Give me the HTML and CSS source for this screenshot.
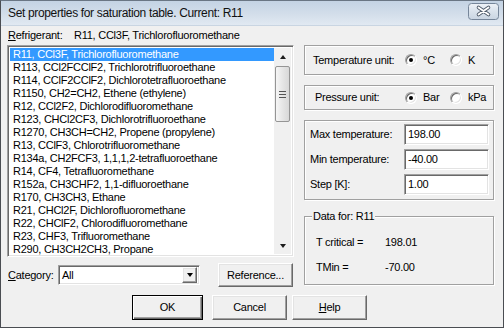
FILE: index.html
```html
<!DOCTYPE html>
<html lang="en">
  <head>
    <meta charset="UTF-8" />
    <title>Set properties for saturation table</title>
    <link rel="stylesheet" href="styles.css">
  </head>
  <body>
    <div class="window">
      <div class="titlebar">
        <span class="title">Set properties for saturation table. Current: R11</span>
        <div class="close-btn">
          <svg width="31" height="17" viewBox="0 0 31 17">
            <defs>
              <linearGradient id="closeGrad" x1="0" y1="0" x2="0" y2="1">
                <stop offset="0" stop-color="#eef2f7" />
                <stop offset="0.5" stop-color="#d9e2ec" />
                <stop offset="1" stop-color="#c9d5e2" />
              </linearGradient>
            </defs>
            <rect x="0.5" y="0.5" width="30" height="16" rx="3" fill="url(#closeGrad)" stroke="#76869a" />
            <path d="M10.5 4.5 L20.5 11.5 M20.5 4.5 L10.5 11.5" stroke="#4d5968" stroke-width="3.6" stroke-linecap="round" fill="none" />
            <path d="M10.5 4.5 L20.5 11.5 M20.5 4.5 L10.5 11.5" stroke="#ffffff" stroke-width="1.8" stroke-linecap="round" fill="none" />
          </svg>
        </div>
      </div>

      <div class="client">
        <div class="ref-row">
          <span class="ref-label"><u>R</u>efrigerant:</span>
          <span class="ref-value">R11, CCl3F, Trichlorofluoromethane</span>
        </div>

        <div class="main">
          <div class="left">
            <div class="listbox sunken">
              <ul class="items">
                <li class="selected">R11, CCl3F, Trichlorofluoromethane</li>
                <li>R113, CCl2FCClF2, Trichlorotrifluoroethane</li>
                <li>R114, CClF2CClF2, Dichlorotetrafluoroethane</li>
                <li>R1150, CH2=CH2, Ethene (ethylene)</li>
                <li>R12, CCl2F2, Dichlorodifluoromethane</li>
                <li>R123, CHCl2CF3, Dichlorotrifluoroethane</li>
                <li>R1270, CH3CH=CH2, Propene (propylene)</li>
                <li>R13, CClF3, Chlorotrifluoromethane</li>
                <li>R134a, CH2FCF3, 1,1,1,2-tetrafluoroethane</li>
                <li>R14, CF4, Tetrafluoromethane</li>
                <li>R152a, CH3CHF2, 1,1-difluoroethane</li>
                <li>R170, CH3CH3, Ethane</li>
                <li>R21, CHCl2F, Dichlorofluoromethane</li>
                <li>R22, CHClF2, Chlorodifluoromethane</li>
                <li>R23, CHF3, Trifluoromethane</li>
                <li>R290, CH3CH2CH3, Propane</li>
              </ul>
              <div class="scrollbar">
                <div class="arrow arrow-up"></div>
                <div class="thumb"><div class="grip"></div></div>
                <div class="track"></div>
                <div class="arrow arrow-down"></div>
              </div>
            </div>

            <div class="category-row">
              <span class="cat-label"><u>C</u>ategory:</span>
              <div class="combo sunken">
                <span class="combo-text">All</span>
                <div class="combo-btn raised"><span class="tri-down"></span></div>
              </div>
              <div class="btn raised ref-btn">Reference...</div>
            </div>
          </div>

          <div class="right">
            <div class="group unit-box temp-unit">
              <span class="unit-label temp-label">Temperature unit:</span>
              <span class="radio-opt first"><span class="radio checked"></span>&deg;C</span>
              <span class="radio-opt"><span class="radio"></span>K</span>
            </div>

            <div class="group unit-box press-unit">
              <span class="unit-label press-label">Pressure unit:</span>
              <span class="radio-opt first"><span class="radio checked"></span>Bar</span>
              <span class="radio-opt"><span class="radio"></span>kPa</span>
            </div>

            <div class="group limits">
              <div class="field-row">
                <span class="field-label">Max temperature:</span>
                <div class="field sunken">198.00</div>
              </div>
              <div class="field-row">
                <span class="field-label">Min temperature:</span>
                <div class="field sunken">-40.00</div>
              </div>
              <div class="field-row">
                <span class="field-label">Step [K]:</span>
                <div class="field sunken">1.00</div>
              </div>
            </div>

            <div class="group data-box">
              <span class="legend">Data for: R11</span>
              <div class="data-row">
                <span class="data-name">T critical =</span>
                <span>198.01</span>
              </div>
              <div class="data-row">
                <span class="data-name">TMin =</span>
                <span>-70.00</span>
              </div>
            </div>
          </div>
        </div>

        <div class="buttons">
          <div class="btn raised default ok-btn">OK</div>
          <div class="btn raised cancel-btn">Cancel</div>
          <div class="btn raised"><u>H</u>elp</div>
        </div>
      </div>
    </div>
  </body>
</html>
```

FILE: styles.css
```css
* {
  margin: 0;
  padding: 0;
  box-sizing: border-box;
}

body {
  width: 504px;
  height: 328px;
  overflow: hidden;
  font-family: "Liberation Sans", Arial, sans-serif;
  font-size: 11px;
  line-height: 13px;
  letter-spacing: -0.25px;
  color: #000;
  background: #f0f0f0;
}

u {
  text-decoration: underline;
  text-underline-offset: 1px;
}

.window {
  width: 504px;
  height: 328px;
  border: 1px solid #4a4d52;
  border-top-color: #6a7684;
  background: #f0f0f0;
  display: flex;
  flex-flow: column;
}

.titlebar {
  height: 25px;
  display: flex;
  align-items: center;
  justify-content: space-between;
  padding: 0 4px 0 7px;
  background: linear-gradient(to bottom, #c4d3e4 0%, #d3deea 55%, #e1e9f2 100%);
  border-bottom: 1px solid #c9d5e2;
}

.title {
  font-size: 12px;
  letter-spacing: -0.35px;
  color: #111;
  padding-top: 1px;
}

.close-btn {
  height: 17px;
  margin-top: -3px;
}

.close-btn svg {
  display: block;
}

/* 3d borders, classic look */
.sunken {
  border: 1px solid;
  border-color: #a0a0a0 #ffffff #ffffff #a0a0a0;
  box-shadow: inset 1px 1px 0 #696969, inset -1px -1px 0 #e3e3e3;
  background: #fff;
}

.raised {
  border: 1px solid;
  border-color: #ffffff #696969 #696969 #ffffff;
  box-shadow: inset -1px -1px 0 #a0a0a0, inset 1px 1px 0 #e3e3e3;
  background: #f0f0f0;
}

.group {
  border: 1px solid #a0a0a0;
  box-shadow: inset 1px 1px 0 #fff, 1px 1px 0 #fff;
}

.client {
  flex: 1;
  padding: 3px 0 0 6px;
}

.ref-row {
  height: 13px;
  display: flex;
  padding-left: 1px;
}

.ref-label {
  width: 66px;
}

.main {
  display: flex;
  margin-top: 3px;
}

.left {
  width: 287px;
}

.listbox {
  height: 212px;
  display: flex;
  padding: 2px;
}

.items {
  list-style: none;
  flex: 1;
}

.items li {
  height: 13px;
  padding-left: 3px;
  white-space: nowrap;
}

.items li.selected {
  background: #3399ff;
  color: #fff;
}

.scrollbar {
  width: 17px;
  display: flex;
  flex-flow: column;
  align-items: center;
  background: #f0f0f0;
}

.arrow {
  height: 17px;
  width: 17px;
  display: flex;
  align-items: center;
  justify-content: center;
}

.arrow-up::before {
  content: "";
  border-left: 3.5px solid transparent;
  border-right: 3.5px solid transparent;
  border-bottom: 4px solid #1c1c1c;
}

.arrow-down::before {
  content: "";
  border-left: 3.5px solid transparent;
  border-right: 3.5px solid transparent;
  border-top: 4px solid #1c1c1c;
}

.thumb {
  width: 15px;
  height: 56px;
  margin-top: 1px;
  border: 1px solid #959595;
  border-radius: 2px;
  background: linear-gradient(to right, #f6f6f6, #e6e6e6 50%, #d8d8d8);
  display: flex;
  align-items: center;
  justify-content: center;
}

.grip {
  width: 7px;
  height: 7px;
  background: linear-gradient(to bottom, #555 0 1px, transparent 1px 3px, #555 3px 4px, transparent 4px 6px, #555 6px 7px);
}

.track {
  flex: 1;
}

.category-row {
  margin-top: 6px;
  height: 24px;
  display: flex;
  align-items: center;
  padding-left: 1px;
}

.cat-label {
  width: 50px;
}

.combo {
  width: 142px;
  height: 20px;
  display: flex;
  align-items: center;
  padding: 2px;
}

.combo-text {
  flex: 1;
  padding-left: 1px;
}

.combo-btn {
  width: 15px;
  height: 16px;
  display: flex;
  align-items: center;
  justify-content: center;
}

.tri-down {
  border-left: 3.5px solid transparent;
  border-right: 3.5px solid transparent;
  border-top: 4px solid #000;
}

.btn {
  width: 75px;
  height: 25px;
  display: flex;
  align-items: center;
  justify-content: center;
}

.ref-btn {
  margin-left: 18px;
  height: 24px;
}

.right {
  width: 190px;
  margin-left: 10px;
  display: flex;
  flex-flow: column;
}

.unit-box {
  display: flex;
  align-items: center;
}

.temp-unit {
  height: 30px;
  padding-left: 8px;
}

.press-unit {
  height: 25px;
  margin-top: 10px;
  padding-left: 10px;
}

.temp-label {
  width: 92px;
}

.press-label {
  width: 90px;
}

.radio-opt {
  display: flex;
  align-items: center;
  gap: 6px;
}

.radio-opt.first {
  width: 45px;
}

.radio {
  position: relative;
  width: 12px;
  height: 12px;
  border-radius: 50%;
  background: #fff;
  border: 1px solid;
  border-color: #a0a0a0 #ffffff #ffffff #a0a0a0;
  box-shadow: inset 1px 1px 0 #696969, inset -1px -1px 0 #e3e3e3;
}

.radio.checked::after {
  content: "";
  position: absolute;
  left: 3px;
  top: 3px;
  width: 4px;
  height: 4px;
  border-radius: 50%;
  background: #000;
}

.limits {
  height: 80px;
  margin-top: 10px;
  padding: 3px 0 0 5px;
  display: flex;
  flex-flow: column;
  gap: 4px;
}

.field-row {
  height: 21px;
  display: flex;
  align-items: center;
}

.field-label {
  width: 94px;
}

.field {
  width: 85px;
  height: 21px;
  padding: 3px 0 0 3px;
}

.data-box {
  position: relative;
  height: 69px;
  margin-top: 16px;
  padding: 19px 0 0 11px;
  display: flex;
  flex-flow: column;
  gap: 12px;
}

.legend {
  position: absolute;
  left: 7px;
  top: -7px;
  padding: 0 1px;
  background: #f0f0f0;
}

.data-row {
  display: flex;
}

.data-name {
  width: 69px;
}

.buttons {
  display: flex;
  margin-top: 8px;
  padding-left: 125px;
}

.ok-btn {
  width: 71px;
  border: 1px solid #000;
  box-shadow: inset 1px 1px 0 #fff, inset -1px -1px 0 #696969, inset -2px -2px 0 #a0a0a0;
}

.cancel-btn {
  margin-left: 9px;
  margin-right: 5px;
}
```
